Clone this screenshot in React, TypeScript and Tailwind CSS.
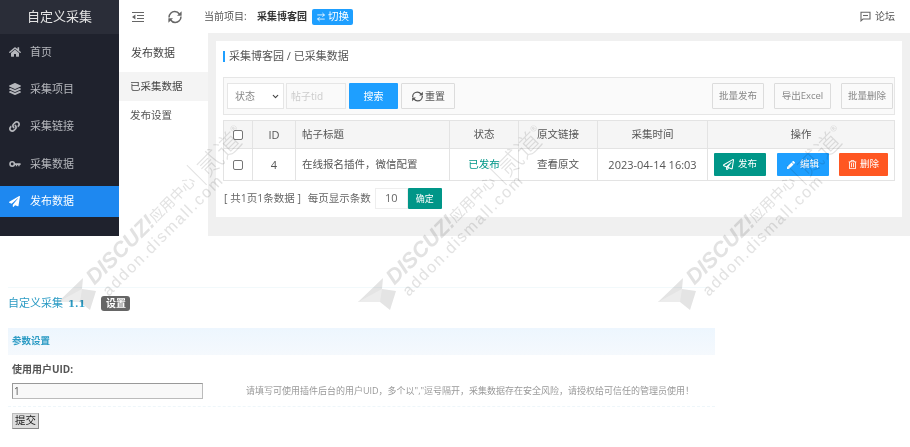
import React from "react";
import { ArrowRightLeft, ChevronDown } from "lucide-react";
import { FaHome, FaLayerGroup, FaLink, FaPaperPlane, FaRegPaperPlane, FaPen, FaRegTrashAlt } from "react-icons/fa";

const font = "font-['Open_Sans','Noto_Sans_CJK_SC','Liberation_Sans',sans-serif]";

function KeyIcon() {
  return (
    <svg width="12" height="12" viewBox="0 0 12 12" fill="none">
      <circle cx="3.2" cy="6" r="2.2" stroke="currentColor" strokeWidth="1.6" />
      <path d="M5.4 5.2H11.6V7H10.6V8.2H9.2V7H8.2V8.2H6.8V7H5.4Z" fill="currentColor" />
    </svg>
  );
}

function Refresh({ size = 15 }: { size?: number }) {
  return (
    <svg width={size} height={size} viewBox="0 0 16 16" fill="none">
      <path d="M2 8.5C2 5 4.6 2.6 7.8 2.6C9.8 2.6 11.4 3.6 12.4 5" stroke="currentColor" strokeWidth="1.5" />
      <path d="M14 7.5C14 11 11.4 13.4 8.2 13.4C6.2 13.4 4.6 12.4 3.6 11" stroke="currentColor" strokeWidth="1.5" />
      <path d="M14.6 2.2V6.8H10Z" fill="currentColor" />
      <path d="M1.4 13.8V9.2H6Z" fill="currentColor" />
    </svg>
  );
}

function Mark({ x, y }: { x: number; y: number }) {
  return (
    <div className="absolute pointer-events-none z-20 mix-blend-multiply" style={{ left: x, top: y }} aria-hidden="true">
      <svg width="39" height="33" viewBox="0 0 39 33" className="absolute left-0 top-[88px]">
        <path d="M0 24L25 0L24 11L38 13L32 32L22 24Z" fill="#e4e4e4" />
        <path d="M0 24L24 11L22 24Z" fill="#ececec" />
      </svg>
      <div className="absolute left-[38px] top-[78px] w-[230px] h-[38px] origin-left -rotate-45 text-[#e2e2e2]">
        <div className="h-[22px] flex items-center whitespace-nowrap leading-none">
          <span className="text-[21.5px] font-bold italic font-['Liberation_Sans',sans-serif]">DISCUZ!</span>
          <span className="text-[14.5px]">应用中心</span>
          <span className="ml-[5px] mr-[5px] w-[1px] h-[28px] bg-[#e2e2e2]" />
          <span className="text-[25px] font-light">贰道</span>
          <span className="text-[8px] self-start">®</span>
        </div>
        <div className="text-[16px] tracking-[1.8px] ml-[2px] leading-[15px] whitespace-nowrap font-['Liberation_Sans',sans-serif]">addon.dismall.com</div>
      </div>
    </div>
  );
}

const nav = [
  { icon: <FaHome size={12} />, label: "首页" },
  { icon: <FaLayerGroup size={12} />, label: "采集项目" },
  { icon: <FaLink size={11} />, label: "采集链接" },
  { icon: <KeyIcon />, label: "采集数据" },
  { icon: <FaPaperPlane size={11} />, label: "发布数据", active: true },
];

const cell = "border border-[#e3e3e3]";
const th = "border border-[#e3e3e3] font-normal pt-[1px]";
const td = "border border-[#e3e3e3] pt-[1px]";
const box = "block mx-auto w-[10px] h-[10px] border border-[#767676] rounded-[2px] bg-white";
const ghost = "h-[26px] border border-[#dcdcdc] rounded-[1px] flex items-center justify-center";

export default function App() {
  return (
    <div className={`relative w-[910px] h-[447px] overflow-hidden bg-white ${font}`}>
      <div className="flex h-[236px]">
        <aside className="w-[119px] shrink-0 bg-[#1f222d] text-[#b5b7bc]">
          <div className="h-[34px] flex items-center justify-center bg-[#2a2d38] text-[13px] text-[#e4e4e4]">自定义采集</div>
          <div className="pt-[2.5px] flex flex-col gap-[6.25px]">
            {nav.map((n) => (
              <div key={n.label} className={`h-[31px] flex items-center text-[11px] ${n.active ? "bg-[#1e88f0] text-white" : ""}`}>
                <span className="w-[30px] pl-[9px] flex items-center shrink-0">{n.icon}</span>
                <span>{n.label}</span>
              </div>
            ))}
          </div>
        </aside>
        <div className="flex-1 min-w-0 flex flex-col">
          <header className="h-[33px] flex items-center text-[#555] text-[10px] shrink-0">
            <svg width="12" height="10" viewBox="0 0 12 10" className="ml-[13px] text-[#666]" fill="currentColor">
              <path d="M0 0H12V1H0ZM5 3H12V4H5ZM5 6H12V7H5ZM0 9H12V10H0ZM3.4 2.6V7.4L0 5Z" />
            </svg>
            <span className="ml-[23px] text-[#666] flex"><Refresh size={16} /></span>
            <span className="ml-[21px] w-[48px]">当前项目:</span>
            <b className="ml-[5px] text-[#333]">采集博客园</b>
            <span className="ml-[5px] w-[41px] h-[16px] rounded-[2px] bg-[#1e9fff] text-white flex items-center justify-center gap-[2px] text-[10.5px]"><ArrowRightLeft size={10} />切换</span>
            <span className="ml-auto mr-[15px] flex items-center gap-[4px] text-[#555]">
              <svg width="11" height="11" viewBox="0 0 11 11" fill="none" stroke="#666" strokeWidth="1.1"><path d="M1 1.2H10V8H3L1 9.8Z" /><path d="M3 4.5H8" /></svg>
              论坛
            </span>
          </header>
          <div className="flex-1 flex min-h-0">
            <div className="w-[89px] shrink-0 bg-white text-[#555] pt-[1px]">
              <div className="h-[38px] flex items-center pl-[12px] text-[11px] text-[#444]">发布数据</div>
              <div className="h-[29px] flex items-center pl-[11px] text-[10.5px] bg-[#f4f4f4] text-[#444]">已采集数据</div>
              <div className="h-[29px] flex items-center pl-[11px] text-[10.5px]">发布设置</div>
            </div>
            <main className="flex-1 min-w-0 bg-[#f0f0f0] pl-[8px] pr-[8px] pt-[8px] pb-[19px]">
              <div className="h-full bg-white pl-[7px] pr-[7px]">
                <div className="h-[30px] flex items-center text-[11px] text-[#555]">
                  <span className="w-[2px] h-[11px] bg-[#1e9fff] mr-[4px]" />采集博客园 / 已采集数据
                </div>
                <div className="mt-[6px] h-[38px] border border-[#e6e6e6] bg-[#fafafa] flex items-center pl-[3px] pr-[1px] text-[10px] text-[#666]">
                  <div className="w-[57px] h-[26px] border border-[#e6e6e6] bg-white flex items-center justify-between pl-[7px] pr-[3px] text-[#888]">状态<ChevronDown size={9} strokeWidth={3} className="text-[#444]" /></div>
                  <div className="ml-[2px] w-[60px] h-[26px] border border-[#e6e6e6] bg-[#fafafa] flex items-center pl-[4px] text-[#ccc]">帖子tid</div>
                  <div className="ml-[3px] w-[49px] h-[26px] bg-[#1e9fff] text-white flex items-center justify-center rounded-[1px]">搜索</div>
                  <div className={`ml-[3px] w-[54px] ${ghost} gap-[1px] text-[#555]`}><Refresh size={13} />重置</div>
                  <div className="ml-auto flex items-center text-[9.5px] text-[#888]">
                    <div className={`w-[52px] ${ghost}`}>批量发布</div>
                    <div className={`ml-[10px] w-[57px] ${ghost}`}>导出Excel</div>
                    <div className={`ml-[10px] w-[52px] ${ghost}`}>批量删除</div>
                  </div>
                </div>
                <table className="mt-[5px] w-full table-fixed border-collapse text-[10.5px] text-[#555]">
                  <colgroup>
                    <col className="w-[29px]" /><col className="w-[43px]" /><col className="w-[154px]" /><col className="w-[69px]" /><col /><col className="w-[110px]" /><col className="w-[187px]" />
                  </colgroup>
                  <thead>
                    <tr className="h-[28px] bg-[#f5f5f5]">
                      <th className={`${cell} font-normal`}><span className={box} /></th>
                      <th className={`${th} text-[11px]`}>ID</th>
                      <th className={`${th} text-left pl-[6px]`}>帖子标题</th>
                      <th className={th}>状态</th>
                      <th className={th}>原文链接</th>
                      <th className={th}>采集时间</th>
                      <th className={th}>操作</th>
                    </tr>
                  </thead>
                  <tbody>
                    <tr className="h-[32px]">
                      <td className={`${cell} p-0`}><span className={box} /></td>
                      <td className={`${td} text-center text-[11px]`}>4</td>
                      <td className={`${td} pl-[6px]`}>在线报名插件，微信配置</td>
                      <td className={`${td} text-center text-[#009688]`}>已发布</td>
                      <td className={`${td} text-center`}>查看原文</td>
                      <td className={`${td} text-center text-[11px]`}>2023-04-14 16:03</td>
                      <td className={`${cell} p-0`}>
                        <div className="flex items-center pl-[6px] text-[9.5px] text-white">
                          <span className="w-[52px] h-[23px] rounded-[1px] bg-[#009688] flex items-center justify-center gap-[4px]"><FaRegPaperPlane size={11} />发布</span>
                          <span className="ml-[11px] w-[52px] h-[23px] rounded-[1px] bg-[#1e9fff] flex items-center justify-center gap-[5px]"><FaPen size={8} />编辑</span>
                          <span className="ml-[10px] w-[49px] h-[23px] rounded-[1px] bg-[#ff5722] flex items-center justify-center gap-[3px]"><FaRegTrashAlt size={9} />删除</span>
                        </div>
                      </td>
                    </tr>
                  </tbody>
                </table>
                <div className="mt-[7px] pl-[1px] flex items-center text-[10.5px] text-[#666]">
                  <span>[ 共1页1条数据 ]</span>
                  <span className="ml-[7px]">每页显示条数</span>
                  <span className="ml-[4px] w-[33px] h-[21px] border border-[#eee] flex items-center justify-center text-[11px]">10</span>
                  <span className="w-[34px] h-[21px] bg-[#009688] text-white flex items-center justify-center text-[9px] rounded-[1px]">确定</span>
                </div>
              </div>
            </main>
          </div>
        </div>
      </div>

      <section className="relative px-[8px]">
        <div className="mr-[195px] border-t border-[#f2f9fb] mt-[51px]" />
        <div className="mt-[7px] flex items-center h-[16px]">
          <span className="text-[11px] text-[#2b9bc4]">自定义采集</span>
          <b className="ml-[5px] text-[10px] text-[#2b9bc4] font-['DejaVu_Serif',serif]">1.1</b>
          <span className="ml-[16px] w-[29px] h-[15px] bg-[#666] rounded-[3px] text-white text-[10px] font-bold flex items-center justify-center">设置</span>
        </div>
        <div className="mt-[17px] mr-[187px] h-[27px] bg-gradient-to-b from-[#edf6fe] to-[#f5f9fd] flex items-center pl-[4px] text-[9.5px] font-bold text-[#2b9bc4]">参数设置</div>
        <div className="mt-[6px] pl-[4px] h-[16px] flex items-center text-[10px] font-bold text-[#555]">使用用户UID:</div>
        <div className="mt-[6px] mr-[187px] flex items-center border-b border-dashed border-[#eef6fa] pb-[7px]">
          <div className="ml-[4px] w-[191px] h-[16px] border border-[#bbb] border-t-[#999] border-l-[#999] bg-[#f8f8f8] text-[10px] text-[#555] pl-[1px] flex items-center">1</div>
          <span className="ml-[43px] text-[9px] whitespace-nowrap text-[#999]">请填写可使用插件后台的用户UID，多个以","逗号隔开，采集数据存在安全风险，请授权给可信任的管理员使用！</span>
        </div>
        <div className="mt-[6px] ml-[4px] w-[27px] h-[16px] bg-[#ddd] border border-[#bbb] border-r-[#888] border-b-[#888] text-[10.5px] text-[#222] flex items-center justify-center">提交</div>
      </section>

      <Mark x={58} y={190} />
      <Mark x={358} y={190} />
      <Mark x={658} y={190} />
    </div>
  );
}
